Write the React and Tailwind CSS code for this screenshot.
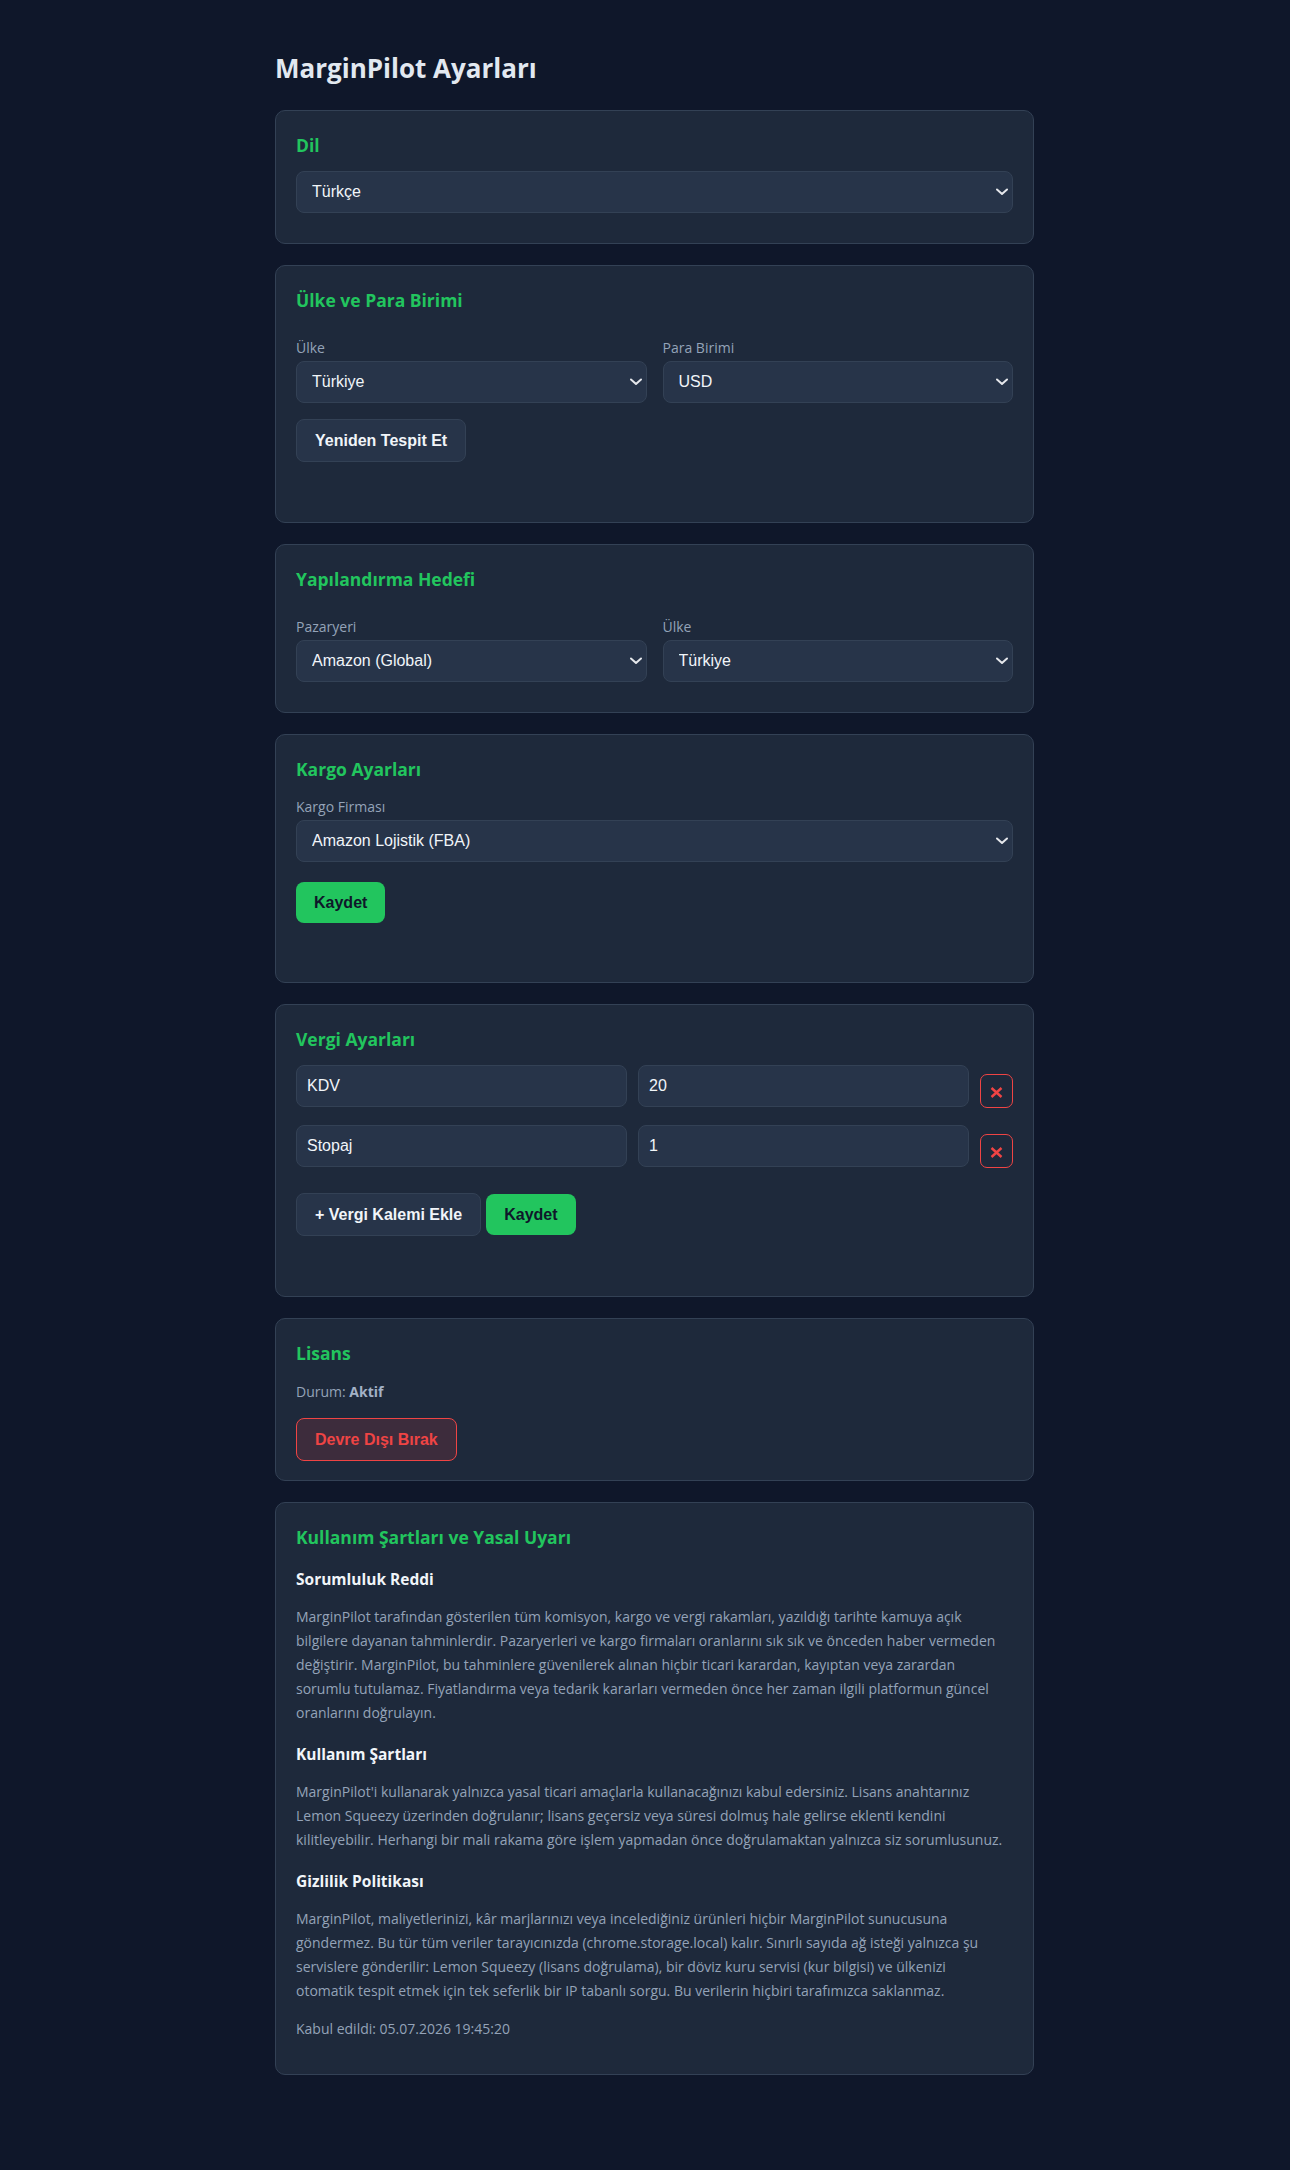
import React from 'react';

const arial = "font-['Liberation_Sans',Arial,sans-serif]";

function Chevron() {
  return (
    <svg
      className="pointer-events-none absolute right-[5px] top-1/2 -translate-y-1/2"
      width="12"
      height="8"
      viewBox="0 0 12 8"
    >
      <path d="M1 1.5 6 5.9 11 1.5" fill="none" stroke="#e5e7eb" strokeWidth="2" strokeLinecap="round" strokeLinejoin="round" />
    </svg>
  );
}

function Select({ value, options }) {
  return (
    <div className="relative">
      <select
        defaultValue={value}
        className={`h-[42px] w-full appearance-none rounded-lg border border-[#334155] bg-[#273449] pl-[15px] pr-8 ${arial} text-[16px] text-[#f1f5f9] outline-none`}
      >
        {options.map((o) => (
          <option key={o} value={o}>
            {o}
          </option>
        ))}
      </select>
      <Chevron />
    </div>
  );
}

function Field({ label, children }) {
  return (
    <div>
      <label className="mb-px block text-[14px] leading-[24px] text-[#94a3b8]">{label}</label>
      {children}
    </div>
  );
}

function Card({ title, className = '', children }) {
  return (
    <section className={`flex flex-col rounded-[10px] border border-[#334155] bg-[#1e293b] px-5 pt-5 ${className}`}>
      <h2 className="mb-3 text-[17.5px] font-bold leading-[28px] text-[#22c55e]">{title}</h2>
      {children}
    </section>
  );
}

function SecondaryButton({ children }) {
  return (
    <button className={`h-[43px] rounded-lg border border-[#334155] bg-[#273449] px-[18px] ${arial} text-[16px] font-bold text-[#f1f5f9]`}>
      {children}
    </button>
  );
}

function PrimaryButton({ children }) {
  return (
    <button className={`h-[41px] rounded-lg bg-[#22c55e] px-[18px] ${arial} text-[16px] font-bold text-[#0f172a]`}>
      {children}
    </button>
  );
}

function TaxRow({ name, rate }) {
  return (
    <div className="flex items-start gap-[11px]">
      <input
        defaultValue={name}
        className={`h-[42px] min-w-0 flex-1 rounded-lg border border-[#334155] bg-[#273449] px-[10px] ${arial} text-[16px] text-[#f1f5f9] outline-none`}
      />
      <input
        defaultValue={rate}
        className={`h-[42px] min-w-0 flex-1 rounded-lg border border-[#334155] bg-[#273449] px-[10px] ${arial} text-[16px] text-[#f1f5f9] outline-none`}
      />
      <button className="mt-[9px] flex h-[34px] w-[33px] shrink-0 items-center justify-center rounded-[7px] border border-[#ef4444]">
        <svg className="mt-[3px]" width="13" height="11" viewBox="0 0 13 11">
          <path d="M1.5 1 11.5 10M11.5 1 1.5 10" stroke="#ef4444" strokeWidth="2.4" />
        </svg>
      </button>
    </div>
  );
}

const legal = [
  {
    title: 'Sorumluluk Reddi',
    lines: [
      'MarginPilot tarafından gösterilen tüm komisyon, kargo ve vergi rakamları, yazıldığı tarihte kamuya açık',
      'bilgilere dayanan tahminlerdir. Pazaryerleri ve kargo firmaları oranlarını sık sık ve önceden haber vermeden',
      'değiştirir. MarginPilot, bu tahminlere güvenilerek alınan hiçbir ticari karardan, kayıptan veya zarardan',
      'sorumlu tutulamaz. Fiyatlandırma veya tedarik kararları vermeden önce her zaman ilgili platformun güncel',
      'oranlarını doğrulayın.',
    ],
  },
  {
    title: 'Kullanım Şartları',
    lines: [
      "MarginPilot'i kullanarak yalnızca yasal ticari amaçlarla kullanacağınızı kabul edersiniz. Lisans anahtarınız",
      'Lemon Squeezy üzerinden doğrulanır; lisans geçersiz veya süresi dolmuş hale gelirse eklenti kendini',
      'kilitleyebilir. Herhangi bir mali rakama göre işlem yapmadan önce doğrulamaktan yalnızca siz sorumlusunuz.',
    ],
  },
  {
    title: 'Gizlilik Politikası',
    lines: [
      'MarginPilot, maliyetlerinizi, kâr marjlarınızı veya incelediğiniz ürünleri hiçbir MarginPilot sunucusuna',
      'göndermez. Bu tür tüm veriler tarayıcınızda (chrome.storage.local) kalır. Sınırlı sayıda ağ isteği yalnızca şu',
      'servislere gönderilir: Lemon Squeezy (lisans doğrulama), bir döviz kuru servisi (kur bilgisi) ve ülkenizi',
      'otomatik tespit etmek için tek seferlik bir IP tabanlı sorgu. Bu verilerin hiçbiri tarafımızca saklanmaz.',
    ],
  },
];

export default function App() {
  return (
    <div className="min-h-screen bg-[#0f172a] pb-[95px] pl-[19px] pt-[50px] font-['Open_Sans',sans-serif]">
      <div className="mx-auto w-[759px]">
        <h1 className="mb-6 text-[26px] font-bold leading-[36px] text-[#e2e8f0]">MarginPilot Ayarları</h1>

        <div className="flex flex-col gap-[21px]">
          <Card title="Dil" className="pb-[30px]">
            <Select value="Türkçe" options={['Türkçe', 'English']} />
          </Card>

          <Card title="Ülke ve Para Birimi" className="pb-[60px]">
            <div className="grid grid-cols-2 gap-4 pt-[10px]">
              <Field label="Ülke">
                <Select value="Türkiye" options={['Türkiye', 'Almanya', 'ABD']} />
              </Field>
              <Field label="Para Birimi">
                <Select value="USD" options={['USD', 'EUR', 'TRY']} />
              </Field>
            </div>
            <div className="mt-4">
              <SecondaryButton>Yeniden Tespit Et</SecondaryButton>
            </div>
          </Card>

          <Card title="Yapılandırma Hedefi" className="pb-[30px]">
            <div className="grid grid-cols-2 gap-4 pt-[10px]">
              <Field label="Pazaryeri">
                <Select value="Amazon (Global)" options={['Amazon (Global)', 'Trendyol', 'Hepsiburada']} />
              </Field>
              <Field label="Ülke">
                <Select value="Türkiye" options={['Türkiye', 'Almanya', 'ABD']} />
              </Field>
            </div>
          </Card>

          <Card title="Kargo Ayarları" className="pb-[59px]">
            <Field label="Kargo Firması">
              <Select value="Amazon Lojistik (FBA)" options={['Amazon Lojistik (FBA)', 'Yurtiçi Kargo', 'Aras Kargo']} />
            </Field>
            <div className="mt-5">
              <PrimaryButton>Kaydet</PrimaryButton>
            </div>
          </Card>

          <Card title="Vergi Ayarları" className="pb-[60px]">
            <div className="flex flex-col gap-[17px]">
              <TaxRow name="KDV" rate="20" />
              <TaxRow name="Stopaj" rate="1" />
            </div>
            <div className="mt-[25px] flex items-center gap-[5px]">
              <SecondaryButton>+ Vergi Kalemi Ekle</SecondaryButton>
              <PrimaryButton>Kaydet</PrimaryButton>
            </div>
          </Card>

          <Card title="Lisans" className="pb-[19px]">
            <p className="mt-[3px] text-[14px] leading-[20px] text-[#94a3b8]">
              Durum: <strong className="font-bold text-[#a3b1c6]">Aktif</strong>
            </p>
            <div className="mt-4">
              <button
                className={`h-[43px] rounded-lg border border-[#ef4444] bg-[#ef4444]/15 px-[18px] ${arial} text-[16px] font-bold text-[#ef4444]`}
              >
                Devre Dışı Bırak
              </button>
            </div>
          </Card>

          <Card title="Kullanım Şartları ve Yasal Uyarı" className="pb-[35px]">
            {legal.map((s, i) => (
              <div key={s.title} className={i === 0 ? 'mt-[6px]' : 'mt-[19px]'}>
                <h3 className="mb-4 text-[15.5px] font-bold leading-[20px] text-[#f1f5f9]">{s.title}</h3>
                <p className="text-[14px] leading-[24px] text-[#94a3b8]">
                  {s.lines.map((l) => (
                    <span key={l} className="block whitespace-nowrap">
                      {l}
                    </span>
                  ))}
                </p>
              </div>
            ))}
            <p className="mt-4 text-[14px] leading-[20px] text-[#94a3b8]">Kabul edildi: 05.07.2026 19:45:20</p>
          </Card>
        </div>
      </div>
    </div>
  );
}
